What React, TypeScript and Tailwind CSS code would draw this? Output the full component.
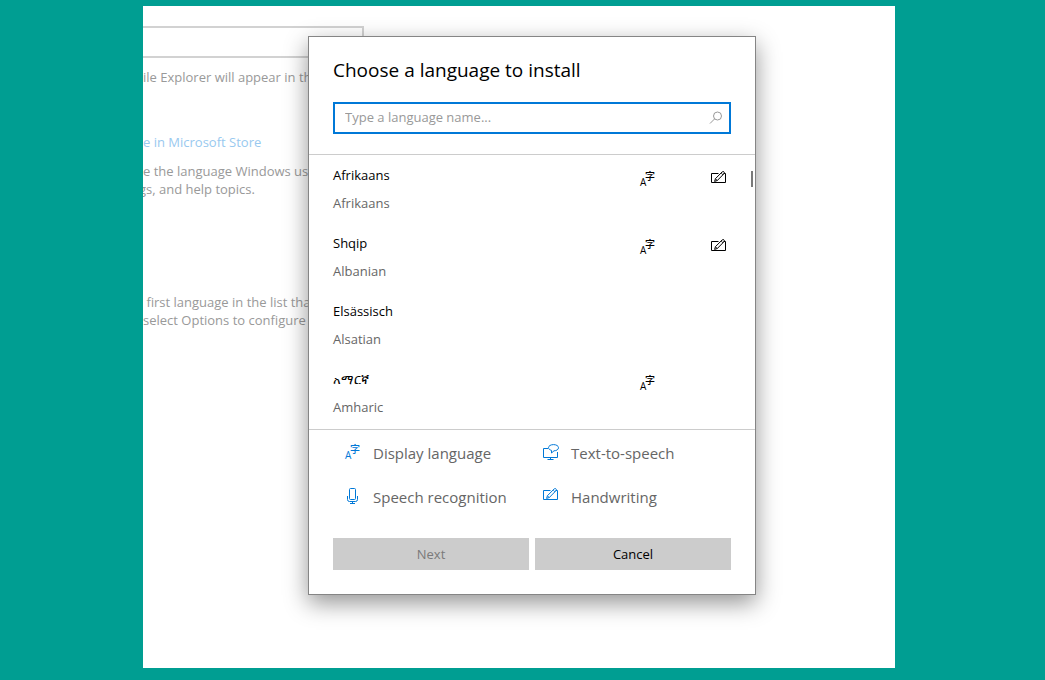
import type { ReactNode } from 'react';

type IconProps = { className?: string };

const languages = [
  { native: 'Afrikaans', english: 'Afrikaans', display: true, handwriting: true },
  { native: 'Shqip', english: 'Albanian', display: true, handwriting: true },
  { native: 'Elsässisch', english: 'Alsatian', display: false, handwriting: false },
  { native: 'አማርኛ', english: 'Amharic', display: true, handwriting: false },
];

function DisplayIcon({ className = '' }: IconProps) {
  return (
    <svg
      className={`overflow-visible ${className}`}
      width="16"
      height="16"
      viewBox="0 0 16 16"
      fill="currentColor"
      aria-hidden="true"
    >
      <text x="0" y="15" fontSize="10" fontWeight="500" fontFamily="Open Sans, sans-serif">
        A
      </text>
      <text x="5" y="9" fontSize="10" fontWeight="500" fontFamily="Noto Sans CJK SC, sans-serif">
        字
      </text>
    </svg>
  );
}

function HandwritingIcon({ className }: IconProps) {
  return (
    <svg className={className} width="16" height="16" viewBox="0 0 16 16" fill="none" stroke="currentColor" aria-hidden="true">
      <path d="M7.5 2.5h-7v9h14v-9h-2" />
      <path d="M3.6 10.4l.9-2.800 6.700-6.700c1.200-1.200 3 .6 1.800 1.800l-6.700 6.800z" />
      <path d="M4.500 7.700l1.900 1.900M10.100 2l1.900 1.900" strokeWidth=".8" />
    </svg>
  );
}

function SpeechIcon({ className }: IconProps) {
  return (
    <svg className={className} width="16" height="16" viewBox="0 0 16 16" fill="none" stroke="currentColor" aria-hidden="true">
      <rect x="4.500" y=".5" width="6" height="11" rx="1" />
      <path d="M2.500 8v3.500a2 2 0 0 0 2 2h6a2 2 0 0 0 2-2V8M7.500 13.500v2M5 15.500h5" />
    </svg>
  );
}

function TextToSpeechIcon({ className }: IconProps) {
  return (
    <svg className={className} width="16" height="16" viewBox="0 0 16 16" fill="none" stroke="currentColor" aria-hidden="true">
      <path d="M5 4.500H.5v9h14V8M7.500 13.500v2M4.500 15.500h6" />
      <path d="M10.500.6c2.800 0 5 1.300 5 3.100 0 1.800-2 3.100-4.500 3.100L8.500 9V6.400C6.700 5.900 5.500 4.900 5.500 3.700c0-1.800 2.200-3.100 5-3.100z" />
    </svg>
  );
}

function SearchIcon() {
  return (
    <svg width="14" height="14" viewBox="0 0 14 14" fill="none" stroke="currentColor" aria-hidden="true">
      <circle cx="8.500" cy="5" r="4" />
      <path d="M5.700 7.800L1 12.500" />
    </svg>
  );
}

function Legend({ icon, children }: { icon: ReactNode; children: ReactNode }) {
  return (
    <div className="flex h-11 items-center gap-3 text-[#666]">
      <span className="pb-0.5 text-[#0078d7]">{icon}</span>
      <span>{children}</span>
    </div>
  );
}

function LanguageDialog() {
  return (
    <div
      role="dialog"
      aria-labelledby="dialog-title"
      className="absolute left-[165px] top-[30px] w-[448px] border border-[#858585] bg-white shadow-[0_8px_22px_rgba(0,0,0,0.42)]"
    >
      <div className="border-b border-[#ccc] px-6 pb-5 pt-[17px]">
        <h1 id="dialog-title" className="text-[19px] leading-8 text-black">
          Choose a language to install
        </h1>
        <div className="mt-4 flex h-8 items-center border-2 border-[#0078d7] pl-2.5 pr-1.5 text-[#999]">
          <input
            type="text"
            aria-label="Language name"
            placeholder="Type a language name..."
            className="min-w-0 flex-1 bg-transparent text-[13px] outline-none placeholder:text-[#999]"
          />
          <SearchIcon />
        </div>
      </div>

      <div className="relative pb-0.5">
        <ul>
          {languages.map((lang) => (
            <li key={lang.english} className="flex h-[68px] gap-14 px-6 py-2.5">
              <div className="flex flex-1 flex-col gap-2 text-[13px] leading-5">
                <span className="text-black">{lang.native}</span>
                <span className="text-[#666]">{lang.english}</span>
              </div>
              <div className="w-4 pt-1.5 text-black">{lang.display && <DisplayIcon />}</div>
              <div className="-ml-px mr-1 w-4 pt-1.5 text-black">{lang.handwriting && <HandwritingIcon />}</div>
            </li>
          ))}
        </ul>
        <div className="absolute right-0.5 top-4 h-4 w-0.5 bg-[#7a7a7a]" />
      </div>

      <div className="border-t border-[#ccc] px-6 pb-6 pt-px">
        <div className="grid grid-cols-2 gap-x-2.5 pl-3 text-[15px]">
          <Legend icon={<DisplayIcon />}>Display language</Legend>
          <Legend icon={<TextToSpeechIcon />}>Text-to-speech</Legend>
          <Legend icon={<SpeechIcon />}>Speech recognition</Legend>
          <Legend icon={<HandwritingIcon />}>Handwriting</Legend>
        </div>
        <div className="mt-[19px] grid grid-cols-2 gap-1.5 text-[13px]">
          <button type="button" disabled className="h-8 bg-[#ccc] pt-px text-[#7a7a7a]">
            Next
          </button>
          <button type="button" className="h-8 bg-[#ccc] pt-px text-black">
            Cancel
          </button>
        </div>
      </div>
    </div>
  );
}

export default function App() {
  return (
    <div className="flex min-h-screen bg-[#009e92] pb-3 pl-[143px] pr-[150px] pt-1.5 font-['Open_Sans','Noto_Sans',sans-serif]">
      <main className="relative flex-1 overflow-hidden bg-white pt-5">
        <div className="h-8 w-[221px] border-2 border-l-0 border-[#d2d2d2]" />
        <div className="w-[170px] overflow-hidden whitespace-nowrap text-[13px] leading-[18px] text-[#999]">
          <p className="mt-2.5">ile Explorer will appear in th</p>
          <a href="#store" className="mt-[47px] block text-[#99c9ef]">
            e in Microsoft Store
          </a>
          <p className="mt-[11px]">
            e the language Windows us
            <span className="-ml-1 block">gs, and help topics.</span>
          </p>
          <p className="mt-[95px]">
            &nbsp;first language in the list tha
            <br />
            select Options to configure
          </p>
        </div>
        <LanguageDialog />
      </main>
    </div>
  );
}
